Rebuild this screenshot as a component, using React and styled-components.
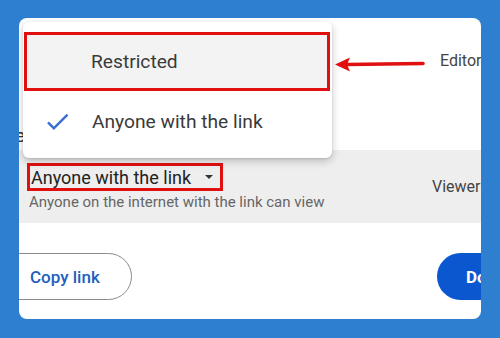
import React from 'react'
import styled, { createGlobalStyle } from 'styled-components'

const Global = createGlobalStyle`
	html, body {
		margin: 0;
		padding: 0;
		background: #2f7fd0;
	}
	body {
		font-family: Roboto, "Noto Sans", Arial, sans-serif;
		color: #3c3c3c;
	}
`

const Page = styled.div`
	width: 500px;
	height: 338px;
	padding: 18px 19px 19px;
	box-sizing: border-box;
`

const Card = styled.div`
	position: relative;
	width: 462px;
	height: 301px;
	background: #fff;
	border-radius: 8px;
	overflow: hidden;
	display: flex;
	flex-direction: column;
`

const Top = styled.div`
	height: 132px;
	position: relative;
	display: flex;
	flex-direction: column;
`

const RoleRow = styled.div`
	display: flex;
	justify-content: flex-end;
	padding-top: 33px;
	height: 20px;
`

const Role = styled.span`
	font-size: 16px;
	color: #444;
	width: ${p => p.w}px;
	white-space: nowrap;
`

const Fragment = styled.span`
	margin-top: 53px;
	margin-left: -4px;
	font-size: 19px;
	color: #333;
`

const Band = styled.div`
	height: 73px;
	background: #eeeeee;
	display: flex;
	align-items: flex-start;
	justify-content: space-between;
	padding: 13px 0 0 8px;
	box-sizing: border-box;
`

const Access = styled.div`
	display: flex;
	flex-direction: column;
`

const Picker = styled.div`
	display: inline-flex;
	align-items: center;
	gap: 14px;
	width: 196px;
	height: 28px;
	box-sizing: border-box;
	border: 3px solid #e01010;
	padding: 0 0 0 1px;
	font-size: 18px;
	color: #222;
`

const Caret = styled.span`
	width: 0;
	height: 0;
	border-left: 4px solid transparent;
	border-right: 4px solid transparent;
	border-top: 4px solid #333;
`

const Hint = styled.div`
	margin-top: 2px;
	margin-left: 2px;
	font-size: 15px;
	color: #666;
	white-space: nowrap;
`

const BandRole = styled(Role)`
	margin-top: 14px;
`

const Footer = styled.div`
	flex: 1;
	display: flex;
	justify-content: space-between;
	align-items: flex-start;
	padding-top: 30px;
`

const Button = styled.div`
	height: 47px;
	box-sizing: border-box;
	border-radius: 24px;
	display: flex;
	align-items: center;
	font-size: 17px;
	font-weight: 500;
	white-space: nowrap;
`

const Outline = styled(Button)`
	margin-left: -40px;
	width: 153px;
	padding-left: 50px;
	border: 1px solid #8a8a8a;
	color: #1f5fbf;
`

const Filled = styled(Button)`
	width: 90px;
	margin-right: -46px;
	padding-left: 29px;
	background: #0b57d0;
	color: #fff;
	font-weight: 700;
`

const Menu = styled.div`
	position: absolute;
	left: 4px;
	top: 4px;
	width: 309px;
	height: 136px;
	background: #fff;
	border-radius: 6px;
	box-shadow: 0 3px 8px rgba(0, 0, 0, 0.22), 0 1px 2px rgba(0, 0, 0, 0.1);
	padding-top: 10px;
	box-sizing: border-box;
`

const Item = styled.div`
	display: flex;
	align-items: center;
	height: ${p => p.h}px;
	margin: 0 2px 0 1px;
	box-sizing: border-box;
	background: ${p => (p.marked ? '#f3f3f3' : '#fff')};
	border: ${p => (p.marked ? '3px solid #e01010' : 'none')};
	padding-left: ${p => (p.marked ? 64 : 19)}px;
	font-size: 19.2px;
	color: #3a3a3a;
	gap: 20px;
`

const Arrow = styled.svg`
	position: absolute;
	left: 314px;
	top: 35px;
`

function Check() {
	return (
		<svg width="29" height="29" viewBox="0 0 24 24">
			<path d="M9 16.17L4.83 12l-1.42 1.41L9 19 21 7l-1.41-1.41z" fill="#3b6fd4" />
		</svg>
	)
}

export default function App() {
	return (
		<>
			<Global />
			<Page>
				<Card>
					<Top>
						<RoleRow>
							<Role w={41}>Editor</Role>
						</RoleRow>
						<Fragment>e</Fragment>
					</Top>
					<Band>
						<Access>
							<Picker>
								Anyone with the link
								<Caret />
							</Picker>
							<Hint>Anyone on the internet with the link can view</Hint>
						</Access>
						<BandRole w={49}>Viewer</BandRole>
					</Band>
					<Footer>
						<Outline>Copy link</Outline>
						<Filled>Done</Filled>
					</Footer>
					<Menu>
						<Item marked h={59}>Restricted</Item>
						<Item h={60}>
							<Check />
							Anyone with the link
						</Item>
					</Menu>
					<Arrow width="96" height="22" viewBox="0 0 96 22">
						<path d="M90 10.5 L14 11.5" stroke="#e01010" strokeWidth="3.6" strokeLinecap="round" fill="none" />
						<path d="M2 11.5 L17 4.5 L14 11.5 L17 18.5 Z" fill="#e01010" />
					</Arrow>
				</Card>
			</Page>
		</>
	)
}
